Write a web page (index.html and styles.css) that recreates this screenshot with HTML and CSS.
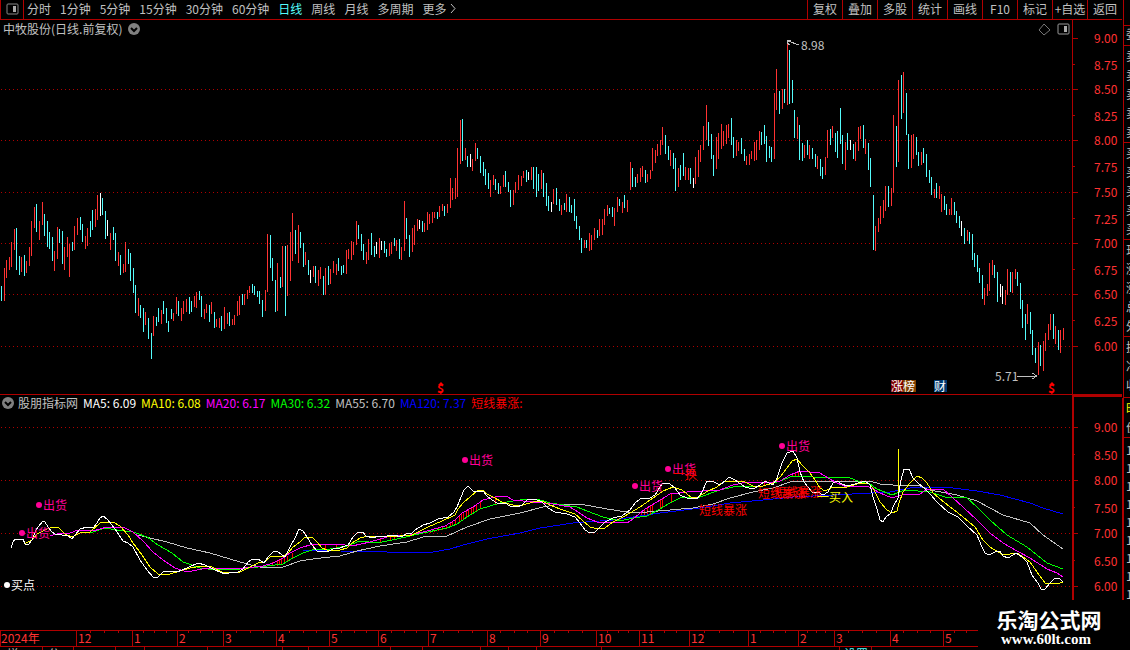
FILE: index.html
```
<!DOCTYPE html>
<html lang="zh-CN">
<head>
<meta charset="utf-8">
<title>中牧股份 日线</title>
<link rel="stylesheet" href="styles.css">
</head>
<body>
<div class="terminal">
<main class="main">
<nav class="toolbar">
<button class="tool-icon" aria-label="侧栏"><svg width="13" height="12" viewBox="0 0 13 12"><rect x="1" y="1" width="11" height="10" rx="1" fill="none" stroke="#888"/><path d="M7 3h3v6H7z" fill="#aaa"/></svg></button>
<div class="periods">
<button>分时</button><button>1分钟</button><button>5分钟</button><button>15分钟</button><button>30分钟</button><button>60分钟</button><button class="active">日线</button><button>周线</button><button>月线</button><button>多周期</button><button class="more">更多<svg width="6" height="9" viewBox="0 0 6 9"><path d="M1 0L5 4.500L1 9" fill="none" stroke="#c0c0c0"/></svg></button>
</div>
<div class="tools">
<button>复权</button><button>叠加</button><button>多股</button><button>统计</button><button>画线</button><button>F10</button><button>标记</button><button>+自选</button><button>返回</button>
</div>
</nav>

<section class="panel">
<header class="panel-head">
<span>中牧股份(日线.前复权)</span>
<svg width="12" height="12" viewBox="0 0 12 12"><circle cx="6" cy="6" r="6" fill="#808080"/><path d="M3 5L6 8L9 5" fill="none" stroke="#000" stroke-width="2"/></svg>
</header>
<svg class="chart" viewBox="0 20 1122 375">
<g class="grid"><path d="M1 89H1071M1 140H1071M1 192H1071M1 243H1071M1 294H1071M1 346H1071"/></g>
<path class="up" d="M4 268V301M6 260V278M9 257V270M11 242V267M14 229V250M21 257V272M26 261V273M29 247V266M31 221V256M34 207V228M39 221V240M42 202V225M54 251V271M57 227V259M64 247V270M67 237V257M69 244V277M74 226V250M77 218V235M85 236V249M87 228V246M95 209V227M97 195V220M110 233V250M118 252V266M123 264V273M125 242V272M138 298V316M145 312V325M153 316V336M161 310V324M173 313V321M176 297V314M181 308V321M183 301V314M186 299V312M194 296V307M196 292V308M204 309V319M206 304V313M211 302V314M216 319V327M219 318V328M224 307V329M227 313V324M232 319V325M234 315V325M237 301V316M239 296V315M244 294V305M247 290V299M249 286V293M265 290V311M267 234V292M277 263V311M282 246V287M287 245V296M290 232V281M292 213V261M298 225V263M305 252V265M313 266V277M318 270V286M320 267V279M325 268V295M330 269V284M333 261V273M336 264V275M346 250V274M348 249V259M351 241V260M353 242V255M356 221V245M366 252V264M368 239V260M379 238V258M389 243V256M391 242V254M396 240V251M401 247V260M404 201V251M412 228V252M414 225V245M417 219V231M424 223V232M427 212V230M429 214V224M432 212V223M434 212V218M439 206V217M442 204V211M447 204V213M450 178V208M452 188V200M455 178V199M457 148V197M460 120V164M465 148V160M472 159V171M475 143V161M490 180V197M493 175V185M500 186V194M503 175V187M513 190V205M515 182V193M518 175V190M521 176V186M523 171V178M531 167V180M541 170V189M553 189V204M561 205V215M566 194V212M584 240V248M589 233V251M591 235V250M594 228V240M599 219V236M602 219V235M604 209V225M607 205V216M614 208V226M617 197V212M622 202V213M627 200V212M630 162V190M637 174V183M640 168V182M642 166V177M647 174V182M650 170V179M652 148V171M655 150V163M657 144V156M660 140V155M662 127V145M670 150V166M678 168V187M685 167V180M688 168V180M695 157V184M698 150V177M700 145V162M703 126V150M706 105V140M716 137V169M718 133V159M721 124V149M723 131V146M726 125V144M728 124V138M736 140V156M738 142V151M746 156V165M749 154V165M751 151V159M754 142V161M756 140V160M759 131V150M774 93V159M776 69V110M782 89V109M787 43V105M797 117V139M804 145V158M809 145V159M817 156V169M825 157V175M827 130V158M832 126V138M845 142V170M855 142V161M858 127V151M860 126V139M865 139V154M875 226V251M878 218V232M880 206V224M883 200V218M885 186V211M891 188V206M893 115V193M898 80V162M903 72V113M911 135V168M913 134V159M921 152V165M934 189V198M939 186V199M941 194V212M949 209V215M951 198V215M967 230V241M984 288V305M987 284V296M989 263V291M992 260V275M1005 290V305M1007 269V295M1012 272V293M1015 269V279M1027 304V324M1038 342V375M1043 341V371M1045 333V351M1048 324V340M1050 314V330M1055 326V344M1060 330V353M1063 328V340"/>
<path class="down" d="M1 286V301M16 228V270M19 256V275M24 255V276M36 204V232M44 214V236M47 221V247M49 232V249M52 237V261M59 229V243M62 231V264M72 242V251M80 217V230M82 224V242M90 221V237M92 210V230M102 198V215M105 211V239M113 227V240M115 233V261M120 255V275M128 249V264M130 253V281M133 268V293M135 285V313M140 305V318M143 308V332M148 318V339M151 333V359M156 317V326M158 308V322M163 301V314M166 308V323M168 321V332M171 309V319M178 301V316M189 297V314M191 301V312M199 291V300M201 296V317M209 305V322M214 312V328M221 316V331M229 312V326M242 294V305M252 284V293M254 286V295M257 291V297M259 291V304M262 300V317M270 235V268M272 258V281M275 280V312M280 277V288M285 246V316M295 230V254M300 232V248M303 243V267M308 260V275M315 266V283M323 276V295M328 266V285M338 258V271M341 266V275M343 265V273M358 225V239M361 234V251M363 244V260M371 233V255M374 246V257M384 241V253M386 249V257M394 238V246M399 239V259M406 218V239M409 235V257M422 221V232M437 212V219M444 206V216M462 119V161M467 156V167M477 148V159M480 156V173M483 162V176M485 169V185M488 173V189M495 179V190M498 183V194M505 171V187M508 182V192M510 190V207M526 170V182M533 167V189M536 167V197M538 174V191M543 173V197M546 183V206M548 196V211M556 188V205M559 199V211M564 203V210M569 197V212M571 205V213M574 199V221M576 216V229M579 226V240M581 238V253M586 240V248M597 230V238M609 208V214M612 207V217M619 199V206M624 195V208M632 168V187M635 177V187M645 170V183M665 135V154M668 146V160M673 153V169M675 158V191M680 165V180M683 153V176M690 168V184M708 122V146M711 134V159M713 155V176M731 118V145M733 137V158M741 138V154M744 149V161M761 132V145M764 125V144M766 136V162M769 146V158M771 147V162M779 91V114M784 89V103M789 50V104M792 80V103M794 110V138M799 125V160M802 143V161M807 140V155M812 148V159M815 154V167M820 159V176M822 167V179M830 129V145M835 133V152M837 131V158M840 108V144M842 135V164M847 133V150M853 144V159M863 125V148M868 143V170M870 158V187M873 195V250M888 186V207M896 126V167M901 75V119M906 93V135M908 134V169M916 137V155M918 152V166M923 148V163M926 154V177M929 170V183M931 177V195M936 183V198M944 196V210M946 204V215M954 202V215M956 211V223M959 216V228M964 228V244M969 232V244M972 234V260M974 253V267M977 255V272M979 268V283M982 275V299M994 265V278M997 272V302M1010 272V292M1017 272V286M1020 283V309M1022 300V328M1025 314V340M1030 312V334M1032 330V355M1035 348V363M1040 345V366M1053 314V339M1058 330V350"/>
<path class="flat" d="M100 193V216M107 220V236M310 270V283M376 242V254M381 241V250M419 220V229M470 154V167M528 172V180M551 202V212M693 178V188M850 140V150M961 221V236M1000 284V297M1002 286V304"/>
<path class="note" d="M799 45L788 41M787 40H791M787 40V43L790 45M1017 376H1037M1032 373L1037 376L1032 379"/>
<text class="gray" x="801" y="50">8.98</text><text class="gray" x="995" y="381">5.71</text>
<g class="dollar"><path d="M438 385L441 382L444 385ZM1049 385L1052 382L1055 385Z"/><text x="437" y="393">$</text><text x="1048" y="393">$</text></g>
<path d="M891 380h12v12h-12z" fill="#800000"/><path d="M903 380h13v12h-13z" fill="#804000"/><path d="M934 380h13v12h-13z" fill="#003870"/>
<text class="white" x="891" y="391">涨榜</text><text class="white" x="934" y="391">财</text>
<path class="axis" d="M1072 20V395M0 394H1122M1073 38H1078M1073 89H1078M1073 140H1078M1073 192H1078M1073 243H1078M1073 294H1078M1073 346H1078M1073 64H1075M1073 115H1075M1073 166H1075M1073 218H1075M1073 269H1075M1073 320H1075"/>
<g class="scale"><text x="1094" y="43">9.00</text><text x="1094" y="70">8.75</text><text x="1094" y="94">8.50</text><text x="1094" y="121">8.25</text><text x="1094" y="145">8.00</text><text x="1094" y="172">7.75</text><text x="1094" y="197">7.50</text><text x="1094" y="224">7.25</text><text x="1094" y="248">7.00</text><text x="1094" y="275">6.75</text><text x="1094" y="299">6.50</text><text x="1094" y="326">6.25</text><text x="1094" y="351">6.00</text></g>
<path d="M1044 24L1050 30L1044 35L1039 30Z" fill="none" stroke="#777"/><rect x="1058" y="24" width="11" height="10" rx="1" fill="none" stroke="#999"/><path d="M1064 26h3v6h-3z" fill="#aaa"/>
</svg>
</section>

<section class="panel">
<header class="panel-head indicator">
<svg width="12" height="12" viewBox="0 0 12 12"><circle cx="6" cy="6" r="6" fill="#808080"/><path d="M3 5L6 8L9 5" fill="none" stroke="#000" stroke-width="2"/></svg>
<span>股朋指标网</span><span class="ma5">MA5: 6.09</span><span class="ma10">MA10: 6.08</span><span class="ma20">MA20: 6.17</span><span class="ma30">MA30: 6.32</span><span class="ma55">MA55: 6.70</span><span class="ma120">MA120: 7.37</span><span class="surge">短线暴涨:</span>
</header>
<svg class="chart" viewBox="0 395 1122 235">
<g class="grid"><path d="M1 427H1071M1 480H1071M1 533H1071M1 586H1071"/></g>
<path class="line surge-line" d="M272 562V566M277 561V566M279 560V565M281 559V565M284 558V564M287 556V562M292 553V559M313 544V549M325 545V549M336 544V547M380 539V543M390 537V541M394 537V540M430 531V533M434 530V532M438 528V531M442 527V530M446 525V528M450 523V527M452 522V526M455 520V525M459 516V522M461 514V521M463 512V520M466 511V518M468 509V517M471 508V515M473 507V513M476 505V512M480 502V509M495 497V504M641 512V517M644 510V516M647 508V516M650 506V514M652 505V513M660 500V508M662 498V507M671 494V502M764 482V486M792 473V477M795 472V476M798 471V476"/>
<polyline class="line ma120" points="303,550 320,550 340,551 387,552 410,553 433,552 450,549 463,545 487,539 520,533 540,528 573,523 613,520 640,516 660,513 700,508 730,503 763,500 793,497 833,495 890,492 910,488 933,487 953,488 977,491 1000,495 1030,503 1043,508 1063,514"/>
<polyline class="line ma55" points="138,535 150,538 167,542 187,548 210,553 230,559 247,564 260,567 283,567 300,561 313,559 330,557 340,556 357,551 380,546 407,542 423,537 447,536 467,527 490,519 520,513 543,507 560,504 580,504 607,509 627,512 647,512 670,510 693,508 713,504 730,498 753,492 773,488 790,482 820,481 870,481 880,484 893,485 917,485 930,490 957,495 977,501 1003,515 1030,523 1043,535 1063,549"/>
<polyline class="line ma30" points="72,537 80,533 93,532 105,528 117,530 133,532 147,537 158,545 172,553 183,562 200,568 217,570 240,569 267,566 283,564 293,558 303,553 315,549 330,549 347,546 360,541 377,543 397,539 423,533 447,528 457,524 467,517 480,509 500,503 527,499 537,499 550,503 577,507 587,511 603,517 620,521 633,518 647,516 660,509 670,503 680,498 700,497 720,490 733,487 763,486 780,481 793,476 813,477 848,477 860,482 870,484 877,489 892,495 905,490 930,492 945,497 967,498 977,507 990,520 1007,535 1027,547 1047,563 1063,569"/>
<polyline class="line ma20" points="50,536 60,533 70,533 78,530 93,531 107,527 125,528 133,532 143,541 153,552 163,560 175,568 187,572 197,570 207,568 230,569 245,568 263,566 273,563 283,558 290,553 300,548 313,544 338,544 352,546 370,542 387,537 410,535 427,531 445,526 455,520 462,513 473,507 483,500 495,497 506,496 513,500 533,502 553,504 570,507 578,512 587,518 597,522 627,523 633,519 645,509 657,502 670,494 687,492 720,490 733,485 747,482 767,483 780,481 790,475 800,471 820,473 828,478 837,483 847,487 867,486 873,489 880,493 892,498 902,495 920,494 927,489 943,489 952,497 963,507 977,520 990,533 1003,543 1017,551 1030,558 1047,569 1057,573 1063,577"/>
<polyline class="line ma10" points="24,544 32,540 37,534 47,529 53,527 59,528 65,534 72,537 80,533 90,532 100,523 113,522 120,526 128,535 133,543 142,555 150,567 158,574 170,574 180,571 190,568 202,566 212,567 222,572 233,573 240,572 250,567 258,563 264,562 270,557 283,556 288,553 293,547 300,542 305,537 312,537 317,542 322,548 327,550 340,550 347,548 352,543 360,538 368,536 400,536 412,535 418,532 428,527 442,521 455,515 458,509 463,503 470,497 477,491 483,490 487,494 493,497 502,502 513,505 523,505 533,502 542,501 550,505 560,509 575,514 582,520 590,527 598,529 605,528 613,522 623,517 630,513 640,507 653,498 663,491 673,487 682,490 692,498 698,497 708,491 717,487 723,482 730,481 743,481 753,486 763,486 773,483 780,477 787,468 792,461 797,459 803,466 810,473 815,480 820,488 825,491 833,487 847,487 857,484 868,483 873,488 880,502 887,510 892,513 897,511 899,503 903,492 910,483 917,476 922,478 927,483 933,493 945,503 953,509 963,517 975,527 983,540 990,547 1003,555 1017,553 1023,557 1030,562 1037,572 1045,583 1057,584 1063,582"/>
<path class="line ma10" d="M898 449V498"/>
<polyline class="line ma5" points="11,548 13,542 15,539 23,539 25,544 28,545 32,540 35,532 38,527 43,521 45,522 48,527 52,532 55,534 62,535 68,536 72,539 75,535 80,529 87,527 93,528 97,523 100,518 103,516 107,519 112,525 117,532 123,541 128,543 133,547 140,560 147,570 153,577 158,577 163,572 167,571 177,572 187,568 198,563 205,565 215,570 225,574 233,572 238,572 243,569 248,562 253,559 258,559 264,563 268,557 273,552 277,551 285,557 290,547 295,538 299,529 303,531 307,537 312,545 317,551 327,552 333,549 340,548 345,546 348,545 353,537 357,533 363,532 366,536 373,538 378,536 387,536 393,535 402,537 406,534 412,533 415,530 423,525 430,523 438,519 448,517 454,512 457,507 461,497 464,490 468,486 471,489 474,492 483,491 487,496 492,500 497,503 505,503 510,506 517,507 522,505 528,499 535,499 542,502 548,508 555,512 567,514 575,517 580,523 585,530 590,533 595,532 600,527 605,522 613,518 622,516 630,510 635,503 640,499 650,498 655,495 660,487 663,483 670,484 675,488 680,495 687,498 697,499 702,492 707,481 712,481 720,485 726,480 729,477 735,480 745,487 753,489 760,485 765,481 773,485 777,478 782,463 787,453 793,451 797,458 800,472 804,482 812,492 818,492 823,495 828,492 833,483 837,481 842,484 847,486 855,484 865,481 870,485 873,497 877,509 880,520 883,522 886,517 891,513 893,507 898,498 901,480 904,469 909,469 913,478 918,483 923,487 930,494 937,502 948,512 958,517 967,526 977,535 982,547 985,553 989,555 995,552 1000,551 1003,556 1008,558 1013,555 1016,553 1022,557 1027,562 1032,575 1038,583 1041,589 1045,589 1050,583 1055,578 1060,579 1063,582"/>
<g class="sell"><circle cx="39" cy="505" r="3"/><text x="43" y="510">出货</text><circle cx="22" cy="533" r="3"/><text x="26" y="538">出货</text><circle cx="465" cy="460" r="3"/><text x="469" y="465">出货</text><circle cx="635" cy="486" r="3"/><text x="639" y="491">出货</text><circle cx="668" cy="469" r="3"/><text x="672" y="474">出货</text><circle cx="782" cy="446" r="3"/><text x="786" y="451">出货</text></g>
<g class="red"><text x="673" y="479">一换</text><text x="699" y="515">短线暴涨</text><text x="758" y="498">短线暴涨</text><text x="774" y="497">短线暴涨</text></g>
<text class="yellow" x="817" y="502">一买入</text>
<g class="white"><circle cx="7" cy="585" r="3"/><text x="11" y="590">买点</text></g>
<path class="axis thick" d="M1073 396V600M1072 396H1122"/>
<path class="axis" d="M1074 427H1078M1074 480H1078M1074 533H1078M1074 586H1078M1074 454H1075M1074 507H1075M1074 560H1075"/>
<g class="scale"><text x="1094" y="432">9.00</text><text x="1094" y="460">8.50</text><text x="1094" y="485">8.00</text><text x="1094" y="513">7.50</text><text x="1094" y="538">7.00</text><text x="1094" y="566">6.50</text><text x="1094" y="591">6.00</text></g>
</svg>
</section>

<section class="panel">
<svg class="chart" viewBox="0 630 1122 20">
<path class="axis" d="M0 630H978M0 646H978M0 630V646M76 630V646M132 630V646M177 630V646M223 630V646M276 630V646M329 630V646M378 630V646M428 630V646M487 630V646M540 630V646M596 630V646M639 630V646M689 630V646M748 630V646M798 630V646M834 630V646M890 630V646M943 630V646M90 630V633M104 630V633M118 630V633M143 630V633M154 630V633M166 630V633M188 630V633M200 630V633M212 630V633M236 630V633M250 630V633M263 630V633M289 630V633M303 630V633M316 630V633M341 630V633M354 630V633M366 630V633M391 630V633M404 630V633M416 630V633M443 630V633M458 630V633M472 630V633M500 630V633M514 630V633M527 630V633M554 630V633M568 630V633M582 630V633M607 630V633M618 630V633M628 630V633M651 630V633M664 630V633M676 630V633M704 630V633M719 630V633M733 630V633M760 630V633M773 630V633M785 630V633M807 630V633M816 630V633M825 630V633M848 630V633M862 630V633M876 630V633M903 630V633M917 630V633M930 630V633M954 630V633M966 630V633M42 647V650M73 647V650M115 647V650M144 647V650M207 647V650M282 647V650M308 647V650M390 647V650M422 647V650M480 647V650M508 647V650M536 647V650M601 647V650M839 647V650M871 647V650"/>
<g class="scale"><text x="1" y="643">2024年</text><text x="78" y="643">12</text><text x="134" y="643">1</text><text x="179" y="643">2</text><text x="225" y="643">3</text><text x="278" y="643">4</text><text x="331" y="643">5</text><text x="380" y="643">6</text><text x="430" y="643">7</text><text x="489" y="643">8</text><text x="542" y="643">9</text><text x="598" y="643">10</text><text x="641" y="643">11</text><text x="691" y="643">12</text><text x="750" y="643">1</text><text x="800" y="643">2</text><text x="836" y="643">3</text><text x="892" y="643">4</text><text x="945" y="643">5</text></g>
<text class="gray" x="7" y="659">增</text><text class="gray" x="48" y="659">分</text><text class="cyan" x="844" y="659">设置</text>
</svg>
</section>
</main>

<aside class="quote">
<div class="cell title"></div>
<div class="cell one"><p>委</p></div>
<div class="cell rows"><p>卖</p><p>卖</p><p>卖</p><p>卖</p><p>卖</p></div>
<div class="cell rows"><p>买</p><p>买</p><p>买</p><p>买</p><p>买</p></div>
<div class="cell rows"><p>现</p><p>涨</p><p>涨</p><p>总</p><p>外</p></div>
<div class="cell short"><p>换</p><p>净</p><p>收</p></div>
<div class="cell lower"><p class="yellow">时</p><p>价</p></div>
<div class="cell ticks"><p>1</p><p>1</p><p>1</p><p>1</p><p>1</p><p>1</p><p>1</p><p>1</p><p>1</p></div>
</aside>

<footer class="brand"><strong>乐淘公式网</strong><a href="#">www.60lt.com</a></footer>
</div>
</body>
</html>
```
FILE: styles.css
```
* { box-sizing: border-box; }

body {
  margin: 0;
  background: #000;
  color: #c0c0c0;
  font: 12px/16px "Noto Sans CJK SC", sans-serif;
}

.terminal {
  position: relative;
  display: flex;
  overflow: hidden;
}

.main { flex: 1; min-width: 0; }

button {
  padding: 0;
  border: 0;
  background: none;
  color: inherit;
  font: inherit;
  white-space: nowrap;
  cursor: pointer;
}

.toolbar {
  display: flex;
  height: 20px;
  border-bottom: 1px solid #b00000;
}

.toolbar button { padding-bottom: 2px; }

.toolbar .tool-icon {
  display: flex;
  align-items: center;
  justify-content: center;
  width: 24px;
  border: solid #b00000;
  border-width: 0 1px;
}

.periods {
  display: flex;
  flex: 1;
  gap: 9px;
  padding-left: 3px;
}

.periods .active { color: #54fcfc; }

.more { display: flex; align-items: center; gap: 4px; }

.tools { display: flex; }

.tools button {
  width: 35px;
  border-left: 1px solid #b00000;
}

.panel { position: relative; }

.panel-head {
  position: absolute;
  top: 1px;
  left: 3px;
  display: flex;
  align-items: center;
  gap: 6px;
  white-space: nowrap;
}

.indicator { top: 0; left: 2px; gap: 5px; }
.indicator svg { margin-right: -1px; }

.chart {
  display: block;
  width: 100%;
  height: auto;
  overflow: hidden;
}

.grid, .up, .down, .flat, .note, .axis, .line {
  fill: none;
  shape-rendering: crispEdges;
}

.grid { stroke: #b00000; stroke-dasharray: 1 3; }
.up { stroke: #ff3232; }
.down { stroke: #54fcfc; }
.flat { stroke: #fff; }
.note { stroke: #c0c0c0; }
.axis { stroke: #b00000; }
.thick { stroke-width: 2; }
.scale { fill: #ff3232; }
.red { fill: #f00; }
.dollar { fill: #f00; font-weight: 700; }
.gray { fill: #c0c0c0; }
.white { fill: #fff; }
.sell { fill: #ff0096; }
.cyan { fill: #54fcfc; }
.yellow { fill: #ff0; color: #ff0; }

.ma5 { color: #fff; }
.ma10 { color: #ff0; }
.ma20 { color: #f0f; }
.ma30 { color: #0f0; }
.ma55 { color: #c0c0c0; }
.ma120 { color: #00f; }
.surge { color: #f00; }
.line { stroke: currentColor; }
.surge-line { color: #f00; }

.quote {
  flex: 0 0 8px;
  height: 600px;
  overflow: hidden;
}

.cell {
  overflow: hidden;
  margin-left: 1px;
  padding-left: 2px;
  border-left: 1px solid #b00000;
  border-bottom: 1px solid #b00000;
}

.cell p { margin: 0; }
.title { height: 26px; }
.one { height: 20px; }
.rows { height: 97px; line-height: 19px; }
.short { height: 61px; line-height: 19px; }
.lower { height: 40px; }
.lower p { line-height: 19px; }
.lower, .ticks { margin-left: 0; border-left-width: 2px; }
.ticks { height: 163px; padding-top: 3px; line-height: 18px; border-bottom: 0; }

.brand {
  position: absolute;
  right: 0;
  bottom: 0;
  display: flex;
  flex-direction: column;
  align-items: center;
  width: 152px;
  height: 50px;
  padding: 7px 10px 0 0;
  background: #000;
  color: #fff;
}

.brand strong { font-size: 21px; line-height: 24px; }

.brand a {
  padding-right: 6px;
  color: #fff;
  font: 700 15px/17px "Liberation Serif", serif;
  text-decoration: none;
}
```
